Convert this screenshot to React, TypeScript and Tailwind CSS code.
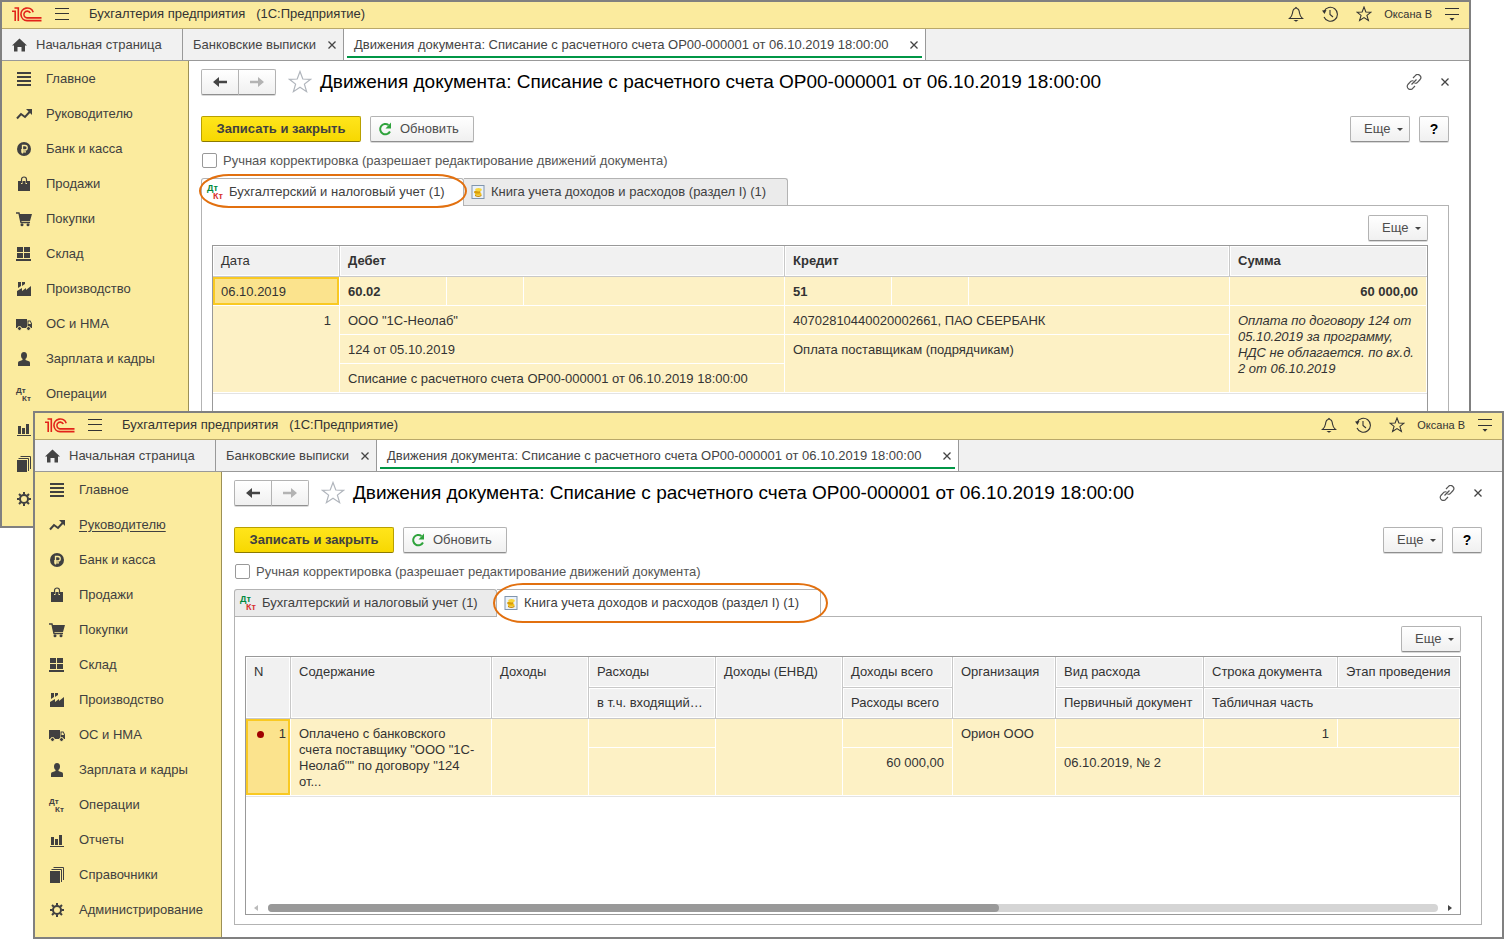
import type { ReactNode } from 'react';
import clsx from 'clsx';

type Section = { label: string; icon: ReactNode };

const sections: Section[] = [
  { label: 'Главное', icon: <path d="M3 3h14v2H3zM3 7h14v2H3zM3 11h14v2H3zM3 15h14v2H3z" /> },
  {
    label: 'Руководителю',
    icon: (
      <>
        <path d="M3 14.500l4-4.500 4 3 5-5.500" fill="none" stroke="currentColor" strokeWidth="2" />
        <path d="M12 5h6v6z" />
      </>
    ),
  },
  {
    label: 'Банк и касса',
    icon: (
      <>
        <circle cx="10" cy="10" r="7" />
        <path d="M8.500 14.500V6.500h2.500a2 2 0 0 1 0 4.500H7M7 12.800h5" fill="none" stroke="#fbeb9e" strokeWidth="1.300" />
      </>
    ),
  },
  {
    label: 'Продажи',
    icon: (
      <>
        <path d="M4 7h3v3h1.500V7h3v3H13V7h3v10H4z" />
        <path d="M7.500 9V5.500a2.500 2.500 0 0 1 5 0V9" fill="none" stroke="currentColor" strokeWidth="1.200" />
      </>
    ),
  },
  {
    label: 'Покупки',
    icon: (
      <>
        <path d="M5 5h13l-2 7H6.500z" />
        <path d="M2 4h3l2 9.500h9" fill="none" stroke="currentColor" strokeWidth="1.400" />
        <circle cx="8" cy="15.800" r="1.500" />
        <circle cx="14" cy="15.800" r="1.500" />
      </>
    ),
  },
  { label: 'Склад', icon: <path d="M3 3h6v5H3zM10 3h6v5h-6zM3 9h6v5H3zM10 9h6v5h-6zM2 15h15v2H2z" /> },
  {
    label: 'Производство',
    icon: <path d="M3 17v-5l5-3v3l4-3v2l5-4v10zM4 3h3v4L4 9zM8 3h3v2L8 7z" />,
  },
  {
    label: 'ОС и НМА',
    icon: (
      <>
        <path d="M2 5h11v9H2zM13.500 6.500h3l1.500 3V14h-4.500z" />
        <path d="M14.500 7.500h1.500l1 2.500h-2.500z" fill="#fbeb9e" />
        <circle cx="5.500" cy="14.500" r="2" stroke="#fbeb9e" />
        <circle cx="14.500" cy="14.500" r="2" stroke="#fbeb9e" />
      </>
    ),
  },
  {
    label: 'Зарплата и кадры',
    icon: (
      <>
        <ellipse cx="10" cy="6.500" rx="3" ry="3.600" />
        <path d="M8.500 9h3v2l4 1.500q.5.500.5 2V17H4v-2.500q0-1.500.5-2l4-1.500z" />
      </>
    ),
  },
  { label: 'Операции', icon: null },
  { label: 'Отчеты', icon: <path d="M3 16h14v1H3zM4 7h3v8H4zM8 9h3v6H8zM12 5h3v10h-3z" /> },
  {
    label: 'Справочники',
    icon: (
      <>
        <path d="M3 6h10v12H3z" />
        <path d="M4.500 4.500h10V17M6.500 2.500h10V15" fill="none" stroke="currentColor" />
      </>
    ),
  },
  {
    label: 'Администрирование',
    icon: (
      <g fill="none" stroke="currentColor" strokeWidth="2">
        <circle cx="10" cy="10" r="4" />
        <path d="M10 3v2.500M10 14.500V17M3 10h2.500M14.500 10H17M5 5l1.800 1.800M13.200 13.200L15 15M15 5l-1.800 1.800M6.800 13.200L5 15" />
      </g>
    ),
  },
];

function DtKt({ colored = false }: { colored?: boolean }) {
  return (
    <svg
      viewBox="0 0 20 20"
      className={clsx('size-5 shrink-0 font-bold', colored ? 'text-[9px]' : 'text-[8px]')}
      fill="currentColor"
    >
      <text x="2" y="9" className={clsx(colored && 'fill-[#00893d]')}>Дт</text>
      <text x="8" y="17" className={clsx(colored && 'fill-[#d8302f]')}>Кт</text>
    </svg>
  );
}

function Coins() {
  return (
    <svg viewBox="0 0 14 14" className="h-[14px] w-[14px] shrink-0">
      <rect x="1" y=".5" width="12" height="13" fill="#eaf2fb" stroke="#8196ad" />
      <path d="M4 9.500q3.500 2.500 6.500 0v1.500q-3 2-6.500 0z" fill="#c98a06" />
      <ellipse cx="7.200" cy="9" rx="3.300" ry="1.600" fill="#f3c31c" />
      <ellipse cx="6.300" cy="7" rx="3.300" ry="1.600" fill="#d79b0a" />
      <ellipse cx="7.500" cy="4.800" rx="3.300" ry="1.700" fill="#f8d63c" />
    </svg>
  );
}

function Logo() {
  return (
    <svg viewBox="0 0 30 15" className="h-[15px] w-[30px]" fill="none" stroke="#e2231a" strokeWidth="1.600">
      <path d="M0 4.300h3.200V14M2.500 1h3.800v13" />
      <path d="M21.200 5.200A6.300 6.300 0 1 0 15 13.600h14.500" />
      <path d="M18.300 6A3.400 3.400 0 1 0 15 10.900h14.500" />
    </svg>
  );
}

function Cross() {
  return (
    <svg viewBox="0 0 8 8" className="size-2" fill="none" stroke="#444" strokeWidth="1.300">
      <path d="M.5.500l7 7M7.500.500l-7 7" />
    </svg>
  );
}

const starPath = 'M12 1.500l2.800 7.500 7.700.300-6.100 4.800 2.200 7.600L12 17.300l-6.600 4.400 2.200-7.600L1.500 9.300 9.200 9z';

function TopBar() {
  return (
    <header className="flex h-[27px] items-center border-b border-[#b9a86a] bg-[#fbeb9e] pr-[10px] pb-0.5 pl-[10px] text-[#333]">
      <Logo />
      <button aria-label="Меню" className="ml-[13px]">
        <svg viewBox="0 0 14 12" className="h-3 w-[14px]" stroke="#333">
          <path d="M0 .5h14M0 5.500h14M0 11.500h14" />
        </svg>
      </button>
      <span className="ml-5 whitespace-pre">Бухгалтерия предприятия   (1С:Предприятие)</span>
      <div className="ml-auto flex items-center gap-[18px]">
        <button aria-label="Уведомления">
          <svg viewBox="0 0 16 16" className="size-4" fill="none" stroke="#333" strokeWidth="1.100">
            <path d="M1.500 12.500h13q-2.500-2-3-5.500-.4-4-2.500-4.500l-1-1-1 1Q5 3 4.500 7q-.5 3.500-3 5.500z" />
            <path d="M5.500 14h5l-2.500 1.800z" fill="#333" stroke="none" />
          </svg>
        </button>
        <button aria-label="История">
          <svg viewBox="0 0 16 16" className="size-4" fill="none" stroke="#333" strokeWidth="1.100">
            <path d="M2 5.500A7 7 0 1 1 2 11M8 4v4.500l3 2.500" />
            <path d="M0 4.500l4.500-.5L2.500 8z" fill="#333" stroke="none" />
          </svg>
        </button>
        <button aria-label="Избранное">
          <svg viewBox="0 0 24 24" className="size-4" fill="none" stroke="#333" strokeWidth="1.600">
            <path d={starPath} />
          </svg>
        </button>
      </div>
      <span className="ml-3 text-[11px]">Оксана В</span>
      <button aria-label="Настройки" className="ml-[13px]">
        <svg viewBox="0 0 14 13" className="h-[13px] w-[14px]" stroke="#333">
          <path d="M0 .5h14M0 6.500h14" />
          <path d="M4.500 10h5L7 12.800z" fill="#333" stroke="none" />
        </svg>
      </button>
    </header>
  );
}

function WindowTabs() {
  return (
    <nav className="flex h-8 border-b border-[#999] bg-[#f1f1f1] text-[#444]">
      <a href="#home" className="flex w-[181px] items-center gap-[9px] border-r border-[#999] pl-[10px]">
        <svg viewBox="0 0 15 14" className="h-[14px] w-[15px]" fill="#444">
          <path d="M7.500.500L15 7.500h-2V13.500H9.500V9h-4v4.500H2v-6H0z" />
        </svg>
        Начальная страница
      </a>
      <div className="flex w-[161px] items-center justify-between border-r border-[#999] pr-[7px] pl-[10px]">
        <a href="#bank">Банковские выписки</a>
        <button aria-label="Закрыть вкладку"><Cross /></button>
      </div>
      <div className="relative flex w-[582px] items-center justify-between border-r border-[#999] bg-white pr-[7px] pl-[10px]">
        <a href="#moves">Движения документа: Списание с расчетного счета ОР00-000001 от 06.10.2019 18:00:00</a>
        <button aria-label="Закрыть вкладку"><Cross /></button>
        <span className="absolute inset-x-[3px] bottom-[2px] h-0.5 bg-[#009646]" />
      </div>
    </nav>
  );
}

function Sidebar({ hovered }: { hovered?: string }) {
  return (
    <nav className="w-[187px] shrink-0 border-r border-[#9c9056] bg-[#fbeb9e] pb-[10px] text-[#404040]">
      {sections.map(({ label, icon }) => (
        <a key={label} href="#section" className="flex h-[35px] items-center gap-3 pl-3">
          {icon ? (
            <svg viewBox="0 0 20 20" className="size-5 shrink-0" fill="currentColor">{icon}</svg>
          ) : (
            <DtKt />
          )}
          <span className={clsx(label === hovered && 'underline underline-offset-2')}>{label}</span>
        </a>
      ))}
    </nav>
  );
}

const buttonStyle =
  'flex h-[26px] items-center rounded-[2px] border border-[#b3b3b3] border-b-[#8f8f8f] bg-linear-to-b from-white to-[#f0f0f0] text-[#4d4d4d] shadow-[0_1px_0_#d9d9d9]';

function MoreButton() {
  return (
    <button className={clsx(buttonStyle, 'w-[60px] justify-between pr-[6px] pl-[13px]')}>
      Еще
      <svg viewBox="0 0 6 3" className="h-[3px] w-[6px]" fill="#444"><path d="M0 0h6L3 3z" /></svg>
    </button>
  );
}

function Th({ children, className, ...rest }: { children?: ReactNode; className?: string; rowSpan?: number; colSpan?: number }) {
  return (
    <th
      {...rest}
      className={clsx(
        'h-[31px] border-r border-b border-[#c8c8c8] bg-[#f1f1f1] px-2 pt-[7px] text-left align-top whitespace-nowrap shadow-[inset_0_0_0_1px_#fff] last:border-r-0',
        className ?? 'font-normal',
      )}
    >
      {children}
    </th>
  );
}

function Td({ children, className, selected, ...rest }: { children?: ReactNode; className?: string; selected?: boolean; rowSpan?: number; colSpan?: number }) {
  return (
    <td
      {...rest}
      className={clsx(
        'border-r border-b border-white pt-[7px] pl-2 align-top',
        selected ? 'bg-[#fbe38d] shadow-[inset_0_0_0_2px_#f9c922]' : 'bg-[#fdf1c5]',
        className ?? 'pr-2',
      )}
    >
      {children}
    </td>
  );
}

function AccountingTable() {
  return (
    <table className="w-full table-fixed border-separate border-spacing-0 border-b border-[#e3e3e3]">
      <colgroup>
        <col className="w-[127px]" />
        <col className="w-[107px]" />
        <col className="w-[77px]" />
        <col className="w-[261px]" />
        <col className="w-[107px]" />
        <col className="w-[77px]" />
        <col className="w-[261px]" />
        <col />
      </colgroup>
      <thead>
        <tr>
          <Th>Дата</Th>
          <Th colSpan={3} className="font-bold">Дебет</Th>
          <Th colSpan={3} className="font-bold">Кредит</Th>
          <Th className="font-bold">Сумма</Th>
        </tr>
      </thead>
      <tbody>
        <tr className="h-[29px] font-bold">
          <Td selected className="font-normal">06.10.2019</Td>
          <Td>60.02</Td>
          <Td />
          <Td />
          <Td>51</Td>
          <Td />
          <Td />
          <Td className="pr-2 text-right">60 000,00</Td>
        </tr>
        <tr className="h-[29px]">
          <Td rowSpan={3} className="pr-2 text-right">1</Td>
          <Td colSpan={3}>ООО "1С-Неолаб"</Td>
          <Td colSpan={3}>40702810440020002661, ПАО СБЕРБАНК</Td>
          <Td rowSpan={3} className="pr-2 italic">
            Оплата по договору 124 от 05.10.2019 за программу, НДС не облагается. по вх.д. 2 от 06.10.2019
          </Td>
        </tr>
        <tr className="h-[29px]">
          <Td colSpan={3}>124 от 05.10.2019</Td>
          <Td colSpan={3} rowSpan={2}>Оплата поставщикам (подрядчикам)</Td>
        </tr>
        <tr className="h-[29px]">
          <Td colSpan={3}>Списание с расчетного счета ОР00-000001 от 06.10.2019 18:00:00</Td>
        </tr>
      </tbody>
    </table>
  );
}

function IncomeBookTable() {
  return (
    <>
      <table className="w-full table-fixed border-separate border-spacing-0 border-b border-[#e3e3e3]">
        <colgroup>
          <col className="w-[45px]" />
          <col className="w-[201px]" />
          <col className="w-[97px]" />
          <col className="w-[127px]" />
          <col className="w-[127px]" />
          <col className="w-[110px]" />
          <col className="w-[103px]" />
          <col className="w-[148px]" />
          <col className="w-[134px]" />
          <col />
        </colgroup>
        <thead>
          <tr>
            <Th rowSpan={2}>N</Th>
            <Th rowSpan={2}>Содержание</Th>
            <Th rowSpan={2}>Доходы</Th>
            <Th>Расходы</Th>
            <Th rowSpan={2}>Доходы (ЕНВД)</Th>
            <Th>Доходы всего</Th>
            <Th rowSpan={2}>Организация</Th>
            <Th>Вид расхода</Th>
            <Th>Строка документа</Th>
            <Th>Этап проведения</Th>
          </tr>
          <tr>
            <Th>в т.ч. входящий…</Th>
            <Th>Расходы всего</Th>
            <Th>Первичный документ</Th>
            <Th colSpan={2}>Табличная часть</Th>
          </tr>
        </thead>
        <tbody>
          <tr className="h-[29px]">
            <Td rowSpan={2} selected className="pr-1">
              <span className="flex items-center justify-between pl-[3px]">
                <span className="size-[7px] rounded-full bg-[#a00000]" />
                1
              </span>
            </Td>
            <Td rowSpan={2} className="pr-4">
              Оплачено с банковского счета поставщику "ООО "1С-Неолаб"" по договору "124 от...
            </Td>
            <Td rowSpan={2} />
            <Td />
            <Td rowSpan={2} />
            <Td />
            <Td rowSpan={2}>Орион ООО</Td>
            <Td />
            <Td className="pr-2 text-right">1</Td>
            <Td />
          </tr>
          <tr className="h-12">
            <Td />
            <Td className="pr-2 text-right">60 000,00</Td>
            <Td>06.10.2019, № 2</Td>
            <Td colSpan={2} />
          </tr>
        </tbody>
      </table>
      <div className="mt-auto flex items-center gap-[10px] px-2 pb-0.5">
        <svg viewBox="0 0 4 6" className="h-[6px] w-1" fill="#bbb"><path d="M4 0v6L0 3z" /></svg>
        <div className="h-2 flex-1 rounded-full bg-[#d5d5d5]">
          <div className="h-2 w-5/8 rounded-full bg-[#999]" />
        </div>
        <svg viewBox="0 0 4 6" className="h-[6px] w-1" fill="#444"><path d="M0 0v6l4-3z" /></svg>
      </div>
    </>
  );
}

function DocTab({ active, className, markClass, children }: { active: boolean; className: string; markClass: string; children: ReactNode }) {
  return (
    <button
      role="tab"
      aria-selected={active}
      className={clsx(
        'relative flex items-center border-t border-r border-[#b3b3b3] text-[#404040]',
        active ? '-mb-px h-7 bg-white pb-px' : 'h-[27px] bg-[#ebebeb]',
        className,
      )}
    >
      {children}
      {active && <span className={clsx('absolute z-10 border-2 border-[#e2700f]', markClass)} />}
    </button>
  );
}

function DocumentForm({ id, tab }: { id: string; tab: 'accounting' | 'book' }) {
  return (
    <main className="flex min-w-0 flex-1 flex-col bg-white pt-2 pr-5 pb-3 pl-3">
      <div className="flex h-[26px] items-center">
        <div className="flex">
          <button aria-label="Назад" className={clsx(buttonStyle, 'w-[38px] justify-center rounded-r-none')}>
            <svg viewBox="0 0 14 10" className="h-[10px] w-[14px]" fill="#444"><path d="M6 0L0 5l6 5V6.300h8V3.700H6z" /></svg>
          </button>
          <button aria-label="Вперед" className={clsx(buttonStyle, '-ml-px w-[38px] justify-center rounded-l-none')}>
            <svg viewBox="0 0 14 10" className="h-[10px] w-[14px]" fill="#b3b3b3"><path d="M8 0l6 5-6 5V6.300H0V3.700h8z" /></svg>
          </button>
        </div>
        <button aria-label="В избранное" className="ml-3">
          <svg viewBox="0 0 24 24" className="size-6" fill="none" stroke="#b0b5bc" strokeWidth="1.200"><path d={starPath} /></svg>
        </button>
        <h1 className="ml-2 text-[19px] leading-6 text-black">
          Движения документа: Списание с расчетного счета ОР00-000001 от 06.10.2019 18:00:00
        </h1>
        <button aria-label="Ссылка" className="ml-auto">
          <svg viewBox="0 0 16 16" className="size-4" fill="none" stroke="#555" strokeWidth="1.200">
            <path d="M7 4l2.300-2.300a3 3 0 0 1 4.800 3.800L11 8.800q-1 .8-2.500.2M9 12l-2.300 2.300a3 3 0 0 1-4.800-3.800L5 7.200Q6 6.400 7.500 7M5.500 10.500l5-5" />
          </svg>
        </button>
        <button aria-label="Закрыть" className="ml-[19px]"><Cross /></button>
      </div>

      <div className="mt-[21px] flex">
        <button className="h-[26px] w-[160px] rounded-[2px] border border-[#b8a000] border-b-[#8c7a00] bg-linear-to-b from-[#ffe51a] to-[#f7d800] font-bold text-[#404040]">
          Записать и закрыть
        </button>
        <button className={clsx(buttonStyle, 'ml-[9px] w-[104px] gap-2 pl-[7px]')}>
          <svg viewBox="0 0 14 14" className="size-[14px]" fill="none" stroke="#2fa33c" strokeWidth="2">
            <path d="M12 9.500A5.200 5.200 0 1 1 10.500 3" />
            <path d="M13 .500v6H7.500z" fill="#2fa33c" stroke="none" />
          </svg>
          Обновить
        </button>
        <div className="ml-auto flex gap-[9px]">
          <MoreButton />
          <button className={clsx(buttonStyle, 'w-[30px] justify-center text-[14px] font-bold text-black')}>?</button>
        </div>
      </div>

      <div className="mt-[11px] flex h-[15px] items-center gap-[6px] pl-px text-[#555]">
        <input id={id} type="checkbox" className="size-[15px] appearance-none rounded-[2px] border border-[#999] bg-white" />
        <label htmlFor={id}>Ручная корректировка (разрешает редактирование движений документа)</label>
      </div>

      <div role="tablist" className="relative mt-[10px] flex">
        <DocTab
          active={tab === 'accounting'}
          className="w-[263px] rounded-t-[3px] border-l pl-[3px]"
          markClass="-top-[5px] -right-1 -bottom-[2px] -left-[3px] rounded-[30px/17px]"
        >
          <DtKt colored />
          <span className="ml-1">Бухгалтерский и налоговый учет (1)</span>
        </DocTab>
        <DocTab
          active={tab === 'book'}
          className="w-[324px] rounded-tr-[3px] pl-[7px]"
          markClass="-top-[7px] -right-2 -bottom-[6px] -left-1 rounded-[30px/20px]"
        >
          <Coins />
          <span className="ml-[6px]">Книга учета доходов и расходов (раздел I) (1)</span>
        </DocTab>
      </div>

      <div className="flex flex-1 flex-col border border-[#b3b3b3] pt-[9px] pr-5 pb-[9px] pl-[10px]">
        <div className="mb-1 flex justify-end">
          <MoreButton />
        </div>
        <div className="flex flex-1 flex-col border border-[#999] text-[#333]">
          {tab === 'accounting' ? <AccountingTable /> : <IncomeBookTable />}
        </div>
      </div>
    </main>
  );
}

function AppWindow({ id, tab, hovered }: { id: string; tab: 'accounting' | 'book'; hovered?: string }) {
  return (
    <div className="border-2 border-[#808080] bg-white">
      <TopBar />
      <WindowTabs />
      <div className="flex">
        <Sidebar hovered={hovered} />
        <DocumentForm id={id} tab={tab} />
      </div>
    </div>
  );
}

export default function App() {
  return (
    <div className="relative min-h-screen bg-white pt-[411px] pr-[2px] pl-[33px] font-['Liberation_Sans',Arial,sans-serif] text-[13px] leading-4">
      <div className="absolute top-0 right-[35px] left-0">
        <AppWindow id="manual-accounting" tab="accounting" />
      </div>
      <div className="relative">
        <AppWindow id="manual-book" tab="book" hovered="Руководителю" />
      </div>
    </div>
  );
}
